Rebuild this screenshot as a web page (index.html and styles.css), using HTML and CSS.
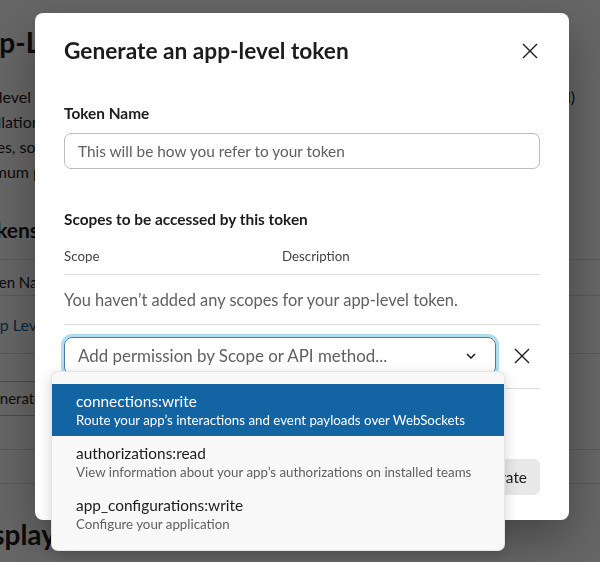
FILE: index.html
```html
<!DOCTYPE html>
<html lang="en">
<head>
<meta charset="utf-8">
<title>Generate an app-level token</title>
<link rel="stylesheet" href="styles.css">
</head>
<body>
<div class="page">
  <h1 class="page-title">App-Level Tokens</h1>
  <p class="page-text">
    <span class="line line-full">App-level tokens allow your app to use platform features that apply to multiple (or all)</span>
    <span class="line">installations of your app. Tokens can be used for Socket Mode and the Discovery API</span>
    <span class="line">scopes, so choose only what your app needs. Tokens are limited by the selected</span>
    <span class="line">minimum permissions and can be revoked at any time.</span>
  </p>
  <h2 class="page-sub">Tokens</h2>
  <div class="page-table">
    <div class="pt-head">Token Name</div>
    <div class="pt-row"><span class="pt-link">App Level Token</span></div>
  </div>
  <div class="page-actions"><span class="page-btn">Generate Token and Scopes</span></div>
  <div class="page-divider"></div>
  <h1 class="page-title page-title-2">Display Information</h1>
</div>

<div class="overlay">
  <div class="modal">
    <div class="modal-header">
      <h2 class="modal-title">Generate an app-level token</h2>
      <span class="icon-btn close-btn">
        <svg viewBox="0 0 16 16" width="16" height="16"><path d="M1 1 L15 15 M15 1 L1 15" stroke="#1d1c1d" stroke-width="1.4" fill="none"/></svg>
      </span>
    </div>
    <div class="modal-body">
      <div class="field-label">Token Name</div>
      <div class="text-input">This will be how you refer to your token</div>

      <div class="field-label scopes-label">Scopes to be accessed by this token</div>
      <div class="scope-head">
        <span>Scope</span>
        <span>Description</span>
      </div>
      <div class="scope-empty">You haven’t added any scopes for your app-level token.</div>

      <div class="select-row">
        <div class="select-wrap">
          <div class="select-box">
            <span class="select-placeholder">Add permission by Scope or API method...</span>
            <svg class="chevron" viewBox="0 0 10 6" width="10" height="6"><path d="M1 1 L5 5 L9 1" stroke="#1d1c1d" stroke-width="1.5" fill="none"/></svg>
          </div>
          <div class="menu">
            <div class="menu-item is-active">
              <div class="menu-title">connections:write</div>
              <div class="menu-desc">Route your app’s interactions and event payloads over WebSockets</div>
            </div>
            <div class="menu-item">
              <div class="menu-title">authorizations:read</div>
              <div class="menu-desc">View information about your app’s authorizations on installed teams</div>
            </div>
            <div class="menu-item">
              <div class="menu-title">app_configurations:write</div>
              <div class="menu-desc">Configure your application</div>
            </div>
          </div>
        </div>
        <span class="icon-btn remove-btn">
          <svg viewBox="0 0 16 16" width="16" height="16"><path d="M1 1 L15 15 M15 1 L1 15" stroke="#1d1c1d" stroke-width="1.4" fill="none"/></svg>
        </span>
      </div>
    </div>
    <div class="modal-footer">
      <span class="btn">Cancel</span>
      <span class="btn btn-disabled">Generate</span>
    </div>
  </div>
</div>
</body>
</html>
```

FILE: styles.css
```css
* { box-sizing: border-box; }

html, body {
  margin: 0;
  padding: 0;
  background: #ffffff;
  font-family: Lato, "Liberation Sans", sans-serif;
  color: #1d1c1d;
  overflow: hidden;
}

/* background page */
.page {
  margin-left: -36px;
  padding-top: 24px;
  width: 680px;
}
.page-title {
  margin: 0;
  font-size: 28px;
  line-height: 36px;
  font-weight: 700;
}
.page-title-2 { margin-top: 32px; }
.page-text {
  margin: 24px 0 0;
  font-size: 16px;
  line-height: 25px;
  white-space: nowrap;
}
.line {
  display: block;
  width: 611px;
}
.line-full {
  text-align: justify;
  text-align-last: justify;
}
.page-sub {
  margin: 32px 0 0 10px;
  font-size: 21px;
  line-height: 28px;
  font-weight: 700;
}
.page-table {
  margin-top: 15px;
  border-top: 1px solid #dddddd;
}
.pt-head {
  height: 36px;
  padding: 12px 0 0 12px;
  font-size: 15px;
  line-height: 20px;
  border-bottom: 1px solid #dddddd;
}
.pt-row {
  height: 58px;
  display: flex;
  align-items: center;
  padding-left: 16px;
  font-size: 16px;
  border-bottom: 1px solid #dddddd;
}
.pt-link { color: #1264a3; }
.page-actions { margin-top: 27px; }
.page-btn {
  display: inline-block;
  height: 35px;
  line-height: 33px;
  padding: 0 16px;
  border: 1px solid #bbbbbb;
  border-radius: 4px;
  font-size: 15px;
}
.page-divider {
  margin-top: 33px;
  height: 35px;
  border-top: 1px solid #dddddd;
  border-bottom: 1px solid #dddddd;
}

/* modal */
.overlay {
  position: fixed;
  inset: 0;
  background: rgba(0, 0, 0, 0.6);
  padding: 13px 0 0 35px;
}
.modal {
  width: 534px;
  height: 507px;
  background: #ffffff;
  border-radius: 8px;
  box-shadow: 0 18px 48px rgba(0, 0, 0, 0.35);
  display: flex;
  flex-direction: column;
}
.modal-header {
  display: flex;
  justify-content: space-between;
  align-items: center;
  padding: 24px 29px 0;
}
.modal-title {
  margin: 0;
  font-size: 22.7px;
  line-height: 28px;
  font-weight: 700;
}
.icon-btn {
  display: flex;
  align-items: center;
  justify-content: center;
}
.close-btn {
  width: 20px;
  height: 20px;
}
.modal-body {
  padding: 0 29px;
}
.field-label {
  margin-top: 38px;
  font-size: 15.4px;
  line-height: 20px;
  font-weight: 700;
}
.text-input {
  margin-top: 10px;
  height: 36px;
  border: 1px solid #bdbcbd;
  border-radius: 7px;
  padding: 0 13px;
  font-size: 15.4px;
  line-height: 34px;
  color: #616061;
}
.scopes-label { margin-top: 40px; }
.scope-head {
  display: grid;
  grid-template-columns: 218px 1fr;
  padding: 18px 0 9px;
  font-size: 13.3px;
  line-height: 18px;
  color: #454245;
  border-bottom: 1px solid #dddddd;
}
.scope-empty {
  padding: 14px 0 13px;
  font-size: 16.4px;
  line-height: 22px;
  color: #616061;
  border-bottom: 1px solid #dddddd;
}
.select-row {
  display: flex;
  padding: 12px 0 13px;
  border-bottom: 1px solid #dddddd;
}
.select-wrap {
  position: relative;
  flex: 1;
}
.select-box {
  height: 38px;
  display: flex;
  align-items: center;
  justify-content: space-between;
  padding: 0 19px 0 13px;
  border: 1px solid #4a7aa6;
  border-radius: 8px;
  box-shadow: 0 0 0 3px rgba(29, 155, 209, 0.35);
}
.select-placeholder {
  font-size: 16.9px;
  line-height: 22px;
  color: #616061;
}
.remove-btn {
  width: 44px;
  height: 38px;
  padding-left: 8px;
}
.menu {
  position: absolute;
  top: 34px;
  left: -13px;
  right: -9px;
  background: #f8f8f8;
  border: 1px solid rgba(0, 0, 0, 0.08);
  border-radius: 7px;
  box-shadow: 0 4px 14px rgba(0, 0, 0, 0.18);
  padding: 12px 0 10px;
}
.menu-item {
  padding: 7px 24px 7px;
}
.menu-title {
  font-size: 15.4px;
  line-height: 20px;
  color: #1d1c1d;
}
.menu-desc {
  font-size: 13.3px;
  line-height: 18px;
  color: #616061;
}
.menu-item.is-active {
  background: #1264a3;
}
.menu-item.is-active .menu-title,
.menu-item.is-active .menu-desc {
  color: #ffffff;
}
.modal-footer {
  margin-top: auto;
  display: flex;
  justify-content: flex-end;
  gap: 12px;
  padding: 0 29px 25px;
}
.btn {
  height: 36px;
  padding: 0 12px;
  min-width: 80px;
  border: 1px solid #bbbbbb;
  border-radius: 6px;
  font-size: 15.4px;
  line-height: 34px;
  text-align: center;
}
.btn-disabled {
  background: #e8e8e8;
  border-color: #e8e8e8;
  color: #1d1c1d;
}
```
